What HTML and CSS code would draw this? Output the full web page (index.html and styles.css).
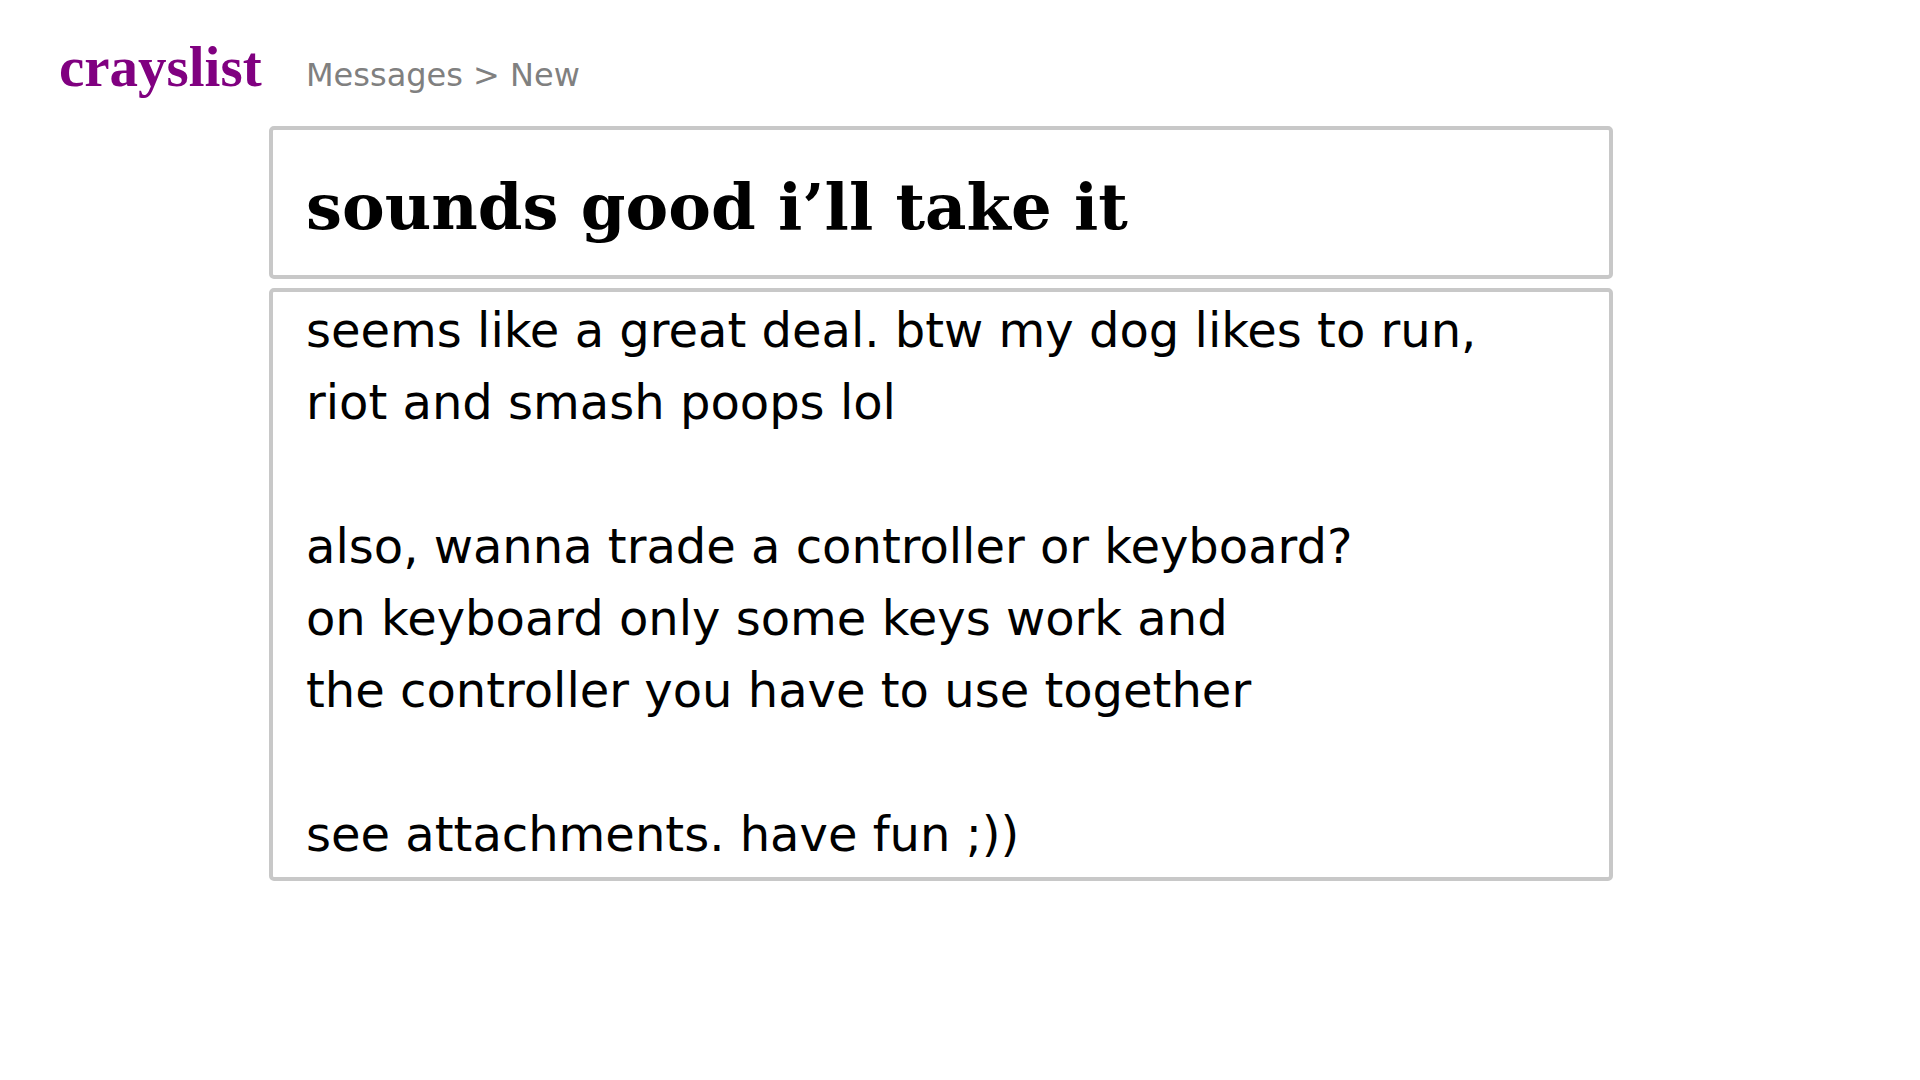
FILE: index.html
```html
<!DOCTYPE html>
<html>
<head>
<meta charset="utf-8">
<link rel="stylesheet" href="styles.css">
</head>
<body>
<header class="top">
  <div class="logo">crayslist</div>
  <div class="crumbs">Messages &gt; New</div>
</header>
<main class="compose">
  <div class="subject-box">
    <h1 class="subject">sounds good i’ll take it</h1>
  </div>
  <div class="body-box">
    <p class="line">seems like a great deal. btw my dog likes to run,</p>
    <p class="line">riot and smash poops lol</p>
    <p class="line">&nbsp;</p>
    <p class="line">also, wanna trade a controller or keyboard?</p>
    <p class="line">on keyboard only some keys work and</p>
    <p class="line">the controller you have to use together</p>
    <p class="line">&nbsp;</p>
    <p class="line">see attachments. have fun ;))</p>
  </div>
</main>
</body>
</html>
```
FILE: styles.css
```css
html, body {
  margin: 0;
  padding: 0;
  background: #ffffff;
}
body {
  font-family: "DejaVu Sans", sans-serif;
  color: #000;
}
.top {
  display: flex;
  align-items: baseline;
  padding: 35px 0 0 59px;
  height: 90px;
  box-sizing: border-box;
}
.logo {
  font-family: "Liberation Serif", "DejaVu Serif", serif;
  font-weight: bold;
  font-size: 57px;
  line-height: 64px;
  color: #800080;
  width: 247px;
}
.crumbs {
  font-size: 32px;
  line-height: 40px;
  color: #808080;
}
.compose {
  margin: 36px 0 0 269px;
  width: 1344px;
  display: flex;
  flex-direction: column;
  gap: 9px;
}
.subject-box {
  border: 4px solid #c8c8c8;
  border-radius: 5px;
  height: 153px;
  box-sizing: border-box;
  padding: 0 33px;
  display: flex;
  align-items: center;
}
.subject {
  margin: 0;
  font-family: "DejaVu Serif", serif;
  font-weight: bold;
  font-size: 64px;
  line-height: 74px;
  padding-top: 9px;
}
.body-box {
  border: 4px solid #c8c8c8;
  border-radius: 5px;
  height: 593px;
  box-sizing: border-box;
  padding: 2px 33px 0;
}
.line {
  margin: 0;
  font-size: 48px;
  line-height: 72px;
  white-space: pre;
}
```
